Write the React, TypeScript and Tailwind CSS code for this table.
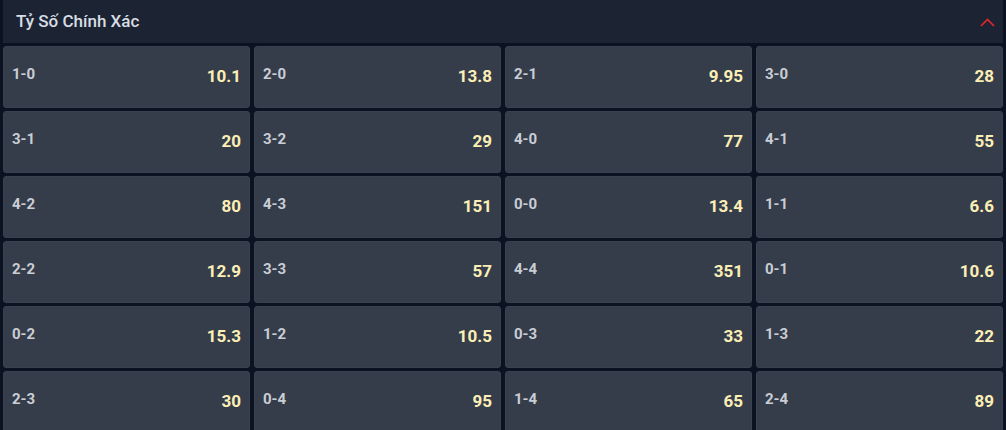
import React from "react";

const data: [string, string][] = [
  ["1-0", "10.1"], ["2-0", "13.8"], ["2-1", "9.95"], ["3-0", "28"],
  ["3-1", "20"], ["3-2", "29"], ["4-0", "77"], ["4-1", "55"],
  ["4-2", "80"], ["4-3", "151"], ["0-0", "13.4"], ["1-1", "6.6"],
  ["2-2", "12.9"], ["3-3", "57"], ["4-4", "351"], ["0-1", "10.6"],
  ["0-2", "15.3"], ["1-2", "10.5"], ["0-3", "33"], ["1-3", "22"],
  ["2-3", "30"], ["0-4", "95"], ["1-4", "65"], ["2-4", "89"],
];

export default function App() {
  return (
    <div
      className="w-[1006px] h-[430px] overflow-hidden bg-[#0b1221] px-[3px]"
      style={{ fontFamily: "Roboto, 'Liberation Sans', sans-serif" }}
    >
      <div className="h-[43px] bg-[#1c2434] flex items-center justify-between pl-[13px] pr-[8px]">
        <span className="text-[17px] font-medium text-[#d9dde4]">Tỷ Số Chính Xác</span>
        <svg width="15" height="9" viewBox="0 0 15 9" className="mt-[1px]">
          <path d="M1 8 L7.5 1.5 L14 8" fill="none" stroke="#e3262c" strokeWidth="1.6" />
        </svg>
      </div>
      <div className="grid grid-cols-4 gap-x-[4px] gap-y-[3px] pt-[3px]">
        {data.map(([score, odd]) => (
          <div
            key={score}
            className="h-[62px] rounded-[3px] bg-[#353d4a] border border-[#3a4250] flex items-center justify-between pl-[8px] pr-[8px]"
          >
            <span className="text-[15px] font-bold text-[#c9cdd5] mb-[5px]">{score}</span>
            <span className="text-[17px] font-bold text-[#fcefb6]">{odd}</span>
          </div>
        ))}
      </div>
    </div>
  );
}
